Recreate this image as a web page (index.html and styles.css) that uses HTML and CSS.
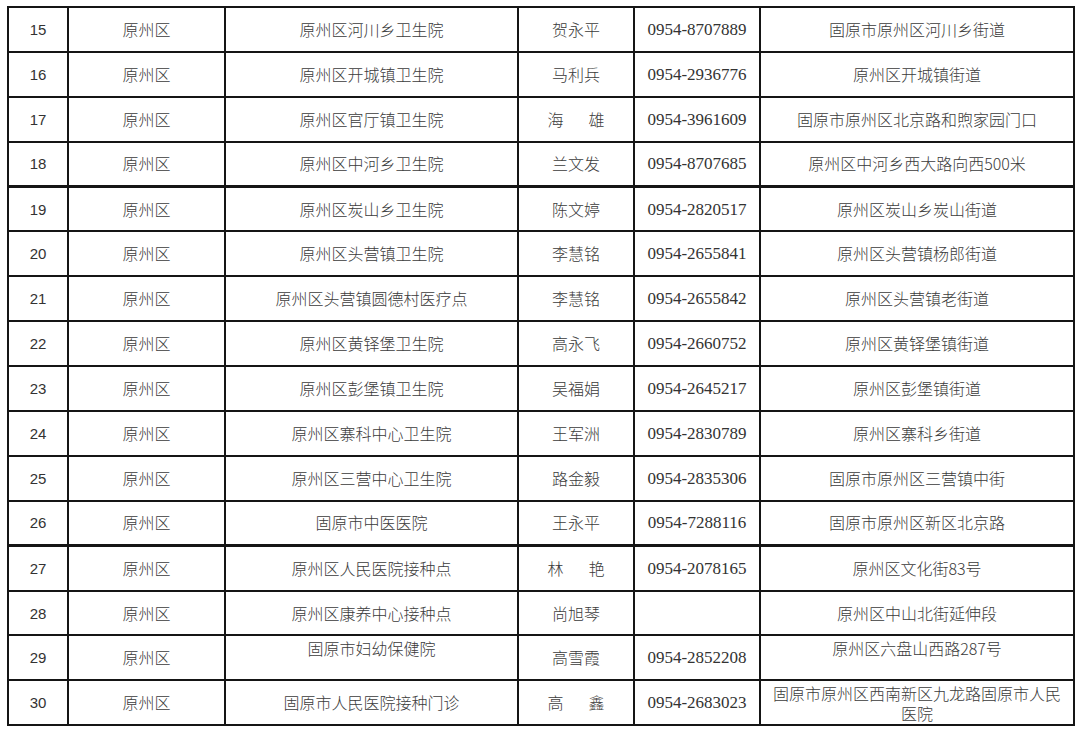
FILE: index.html
```html
<!DOCTYPE html>
<html lang="zh-CN">
<head>
<meta charset="utf-8">
<title>接种点</title>
<link rel="stylesheet" href="styles.css">
</head>
<body>
<table class="sheet">
  <colgroup>
    <col class="c-no"><col class="c-area"><col class="c-name"><col class="c-person"><col class="c-phone"><col class="c-addr">
  </colgroup>
  <tbody>
    <tr><td class="no">15</td><td>原州区</td><td>原州区河川乡卫生院</td><td>贺永平</td><td class="ph">0954-8707889</td><td>固原市原州区河川乡街道</td></tr>
    <tr><td class="no">16</td><td>原州区</td><td>原州区开城镇卫生院</td><td>马利兵</td><td class="ph">0954-2936776</td><td>原州区开城镇街道</td></tr>
    <tr><td class="no">17</td><td>原州区</td><td>原州区官厅镇卫生院</td><td><span class="sp">海</span>雄</td><td class="ph">0954-3961609</td><td>固原市原州区北京路和煦家园门口</td></tr>
    <tr><td class="no">18</td><td>原州区</td><td>原州区中河乡卫生院</td><td>兰文发</td><td class="ph">0954-8707685</td><td>原州区中河乡西大路向西500米</td></tr>
    <tr class="thick"><td class="no">19</td><td>原州区</td><td>原州区炭山乡卫生院</td><td>陈文婷</td><td class="ph">0954-2820517</td><td>原州区炭山乡炭山街道</td></tr>
    <tr><td class="no">20</td><td>原州区</td><td>原州区头营镇卫生院</td><td>李慧铭</td><td class="ph">0954-2655841</td><td>原州区头营镇杨郎街道</td></tr>
    <tr><td class="no">21</td><td>原州区</td><td>原州区头营镇圆德村医疗点</td><td>李慧铭</td><td class="ph">0954-2655842</td><td>原州区头营镇老街道</td></tr>
    <tr><td class="no">22</td><td>原州区</td><td>原州区黄铎堡卫生院</td><td>高永飞</td><td class="ph">0954-2660752</td><td>原州区黄铎堡镇街道</td></tr>
    <tr><td class="no">23</td><td>原州区</td><td>原州区彭堡镇卫生院</td><td>吴福娟</td><td class="ph">0954-2645217</td><td>原州区彭堡镇街道</td></tr>
    <tr><td class="no">24</td><td>原州区</td><td>原州区寨科中心卫生院</td><td>王军洲</td><td class="ph">0954-2830789</td><td>原州区寨科乡街道</td></tr>
    <tr><td class="no">25</td><td>原州区</td><td>原州区三营中心卫生院</td><td>路金毅</td><td class="ph">0954-2835306</td><td>固原市原州区三营镇中街</td></tr>
    <tr><td class="no">26</td><td>原州区</td><td>固原市中医医院</td><td>王永平</td><td class="ph">0954-7288116</td><td>固原市原州区新区北京路</td></tr>
    <tr class="thick"><td class="no">27</td><td>原州区</td><td>原州区人民医院接种点</td><td><span class="sp">林</span>艳</td><td class="ph">0954-2078165</td><td>原州区文化街83号</td></tr>
    <tr><td class="no">28</td><td>原州区</td><td>原州区康养中心接种点</td><td>尚旭琴</td><td class="ph"></td><td>原州区中山北街延伸段</td></tr>
    <tr><td class="no">29</td><td>原州区</td><td class="top">固原市妇幼保健院</td><td>高雪霞</td><td class="ph">0954-2852208</td><td class="top">原州区六盘山西路287号</td></tr>
    <tr><td class="no">30</td><td>原州区</td><td>固原市人民医院接种门诊</td><td><span class="sp">高</span>鑫</td><td class="ph">0954-2683023</td><td class="wrap">固原市原州区西南新区九龙路固原市人民医院</td></tr>
  </tbody>
</table>
</body>
</html>
```

FILE: styles.css
```css
html, body {
  margin: 0;
  padding: 0;
  background: #ffffff;
}

body {
  padding: 6px 7px 0 7px;
  font-family: "Noto Sans CJK SC", "Noto Sans", sans-serif;
  color: #3b3b3b;
}

.sheet {
  border-collapse: collapse;
  table-layout: fixed;
  width: 1066px;
  border: 2px solid #151515;
}

.c-no { width: 60px; }
.c-area { width: 157px; }
.c-name { width: 293px; }
.c-person { width: 116px; }
.c-phone { width: 126px; }
.c-addr { width: 314px; }

.sheet tr {
  height: 44.9px;
}

.sheet td {
  border: 2px solid #151515;
  text-align: center;
  vertical-align: middle;
  font-size: 16px;
  font-weight: 300;
  line-height: 21px;
  padding: 0 9px;
  white-space: nowrap;
}

.sheet tr.thick td {
  border-top-width: 3px;
}

.sheet td.no {
  font-family: "Liberation Sans", Arial, sans-serif;
  font-weight: 400;
  font-size: 15px;
  color: #333333;
}

.sheet td.ph {
  font-family: "Liberation Serif", "Times New Roman", serif;
  font-weight: 400;
  font-size: 17px;
  color: #333333;
  padding: 0 4px;
}

.sheet td.top {
  vertical-align: top;
  padding-top: 2px;
}

.sheet td.wrap {
  white-space: normal;
  line-height: 20px;
  padding: 0 10px;
}

.sp {
  display: inline-block;
  width: 41px;
  text-align: left;
}
```
